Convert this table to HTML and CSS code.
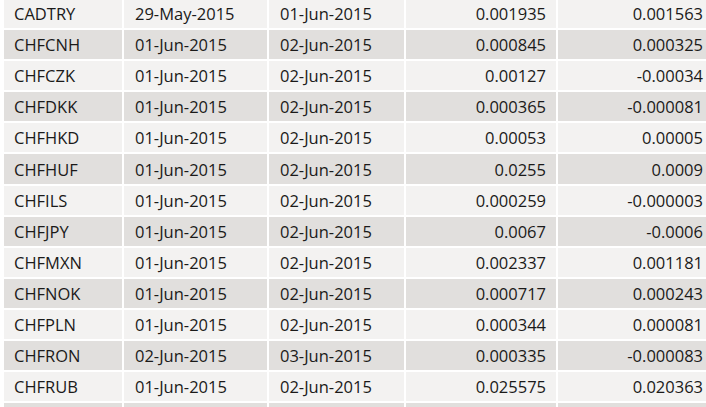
FILE: index.html
```html
<!DOCTYPE html>
<html>
<head>
<meta charset="utf-8">
<link rel="stylesheet" href="styles.css">
</head>
<body>
<div class="table">
  <div class="row"><div class="c">CADTRY</div><div class="c">29-May-2015</div><div class="c">01-Jun-2015</div><div class="c num">0.001935</div><div class="c num">0.001563</div></div>
  <div class="row alt"><div class="c">CHFCNH</div><div class="c">01-Jun-2015</div><div class="c">02-Jun-2015</div><div class="c num">0.000845</div><div class="c num">0.000325</div></div>
  <div class="row"><div class="c">CHFCZK</div><div class="c">01-Jun-2015</div><div class="c">02-Jun-2015</div><div class="c num">0.00127</div><div class="c num">-0.00034</div></div>
  <div class="row alt"><div class="c">CHFDKK</div><div class="c">01-Jun-2015</div><div class="c">02-Jun-2015</div><div class="c num">0.000365</div><div class="c num">-0.000081</div></div>
  <div class="row"><div class="c">CHFHKD</div><div class="c">01-Jun-2015</div><div class="c">02-Jun-2015</div><div class="c num">0.00053</div><div class="c num">0.00005</div></div>
  <div class="row alt"><div class="c">CHFHUF</div><div class="c">01-Jun-2015</div><div class="c">02-Jun-2015</div><div class="c num">0.0255</div><div class="c num">0.0009</div></div>
  <div class="row"><div class="c">CHFILS</div><div class="c">01-Jun-2015</div><div class="c">02-Jun-2015</div><div class="c num">0.000259</div><div class="c num">-0.000003</div></div>
  <div class="row alt"><div class="c">CHFJPY</div><div class="c">01-Jun-2015</div><div class="c">02-Jun-2015</div><div class="c num">0.0067</div><div class="c num">-0.0006</div></div>
  <div class="row"><div class="c">CHFMXN</div><div class="c">01-Jun-2015</div><div class="c">02-Jun-2015</div><div class="c num">0.002337</div><div class="c num">0.001181</div></div>
  <div class="row alt"><div class="c">CHFNOK</div><div class="c">01-Jun-2015</div><div class="c">02-Jun-2015</div><div class="c num">0.000717</div><div class="c num">0.000243</div></div>
  <div class="row"><div class="c">CHFPLN</div><div class="c">01-Jun-2015</div><div class="c">02-Jun-2015</div><div class="c num">0.000344</div><div class="c num">0.000081</div></div>
  <div class="row alt"><div class="c">CHFRON</div><div class="c">02-Jun-2015</div><div class="c">03-Jun-2015</div><div class="c num">0.000335</div><div class="c num">-0.000083</div></div>
  <div class="row"><div class="c">CHFRUB</div><div class="c">01-Jun-2015</div><div class="c">02-Jun-2015</div><div class="c num">0.025575</div><div class="c num">0.020363</div></div>
  <div class="row alt"><div class="c"></div><div class="c"></div><div class="c"></div><div class="c num"></div><div class="c num"></div></div>
</div>
</body>
</html>
```
FILE: styles.css
```css
html, body {
  margin: 0;
  padding: 0;
  background: #ffffff;
  overflow: hidden;
}
body {
  width: 706px;
  height: 407px;
  font-family: "Open Sans", "Segoe UI", sans-serif;
  font-size: 16.5px;
  color: #1b1a19;
}
.table {
  display: flex;
  flex-direction: column;
  gap: 2px;
  margin-top: -1px;
  margin-left: 4px;
  width: 707px;
}
.row {
  display: grid;
  grid-template-columns: 118px 143px 135px 150px 153px;
  column-gap: 2px;
  height: 29.1px;
}
.c {
  background: #f3f2f1;
  padding: 1px 10px 0 10px;
  display: flex;
  align-items: center;
  white-space: nowrap;
  line-height: 28px;
}
.alt .c {
  background: #e1dfdd;
}
.num {
  justify-content: flex-end;
}
.row .c:nth-child(2),
.row .c:nth-child(3) {
  padding-left: 11px;
}
.row .c:nth-child(5) {
  padding-right: 8px;
}
```
